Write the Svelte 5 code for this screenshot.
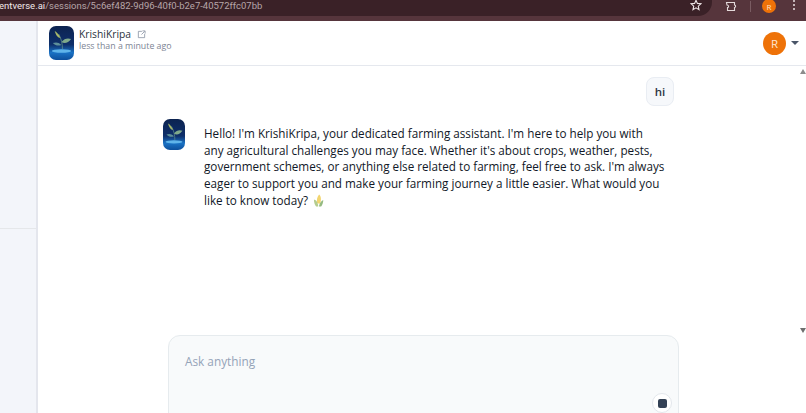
<script>
  const reply = "Hello! I'm KrishiKripa, your dedicated farming assistant. I'm here to help you with any agricultural challenges you may face. Whether it's about crops, weather, pests, government schemes, or anything else related to farming, feel free to ask. I'm always eager to support you and make your farming journey a little easier. What would you like to know today?";
</script>

{#snippet logo(id)}
  <svg class="logo-art" viewBox="0 0 26 34" preserveAspectRatio="none" aria-hidden="true">
    <defs>
      <linearGradient id={id} x1="0" y1="0" x2="0" y2="1">
        <stop offset="0" stop-color="#0c2350" />
        <stop offset="0.55" stop-color="#0e2f6b" />
        <stop offset="0.78" stop-color="#1a72c4" />
        <stop offset="1" stop-color="#0d4f9c" />
      </linearGradient>
    </defs>
    <rect width="26" height="34" fill="url(#{id})" />
    <path d="M14 23 C14 18 13 13 10 8" stroke="#5f8f8a" stroke-width="0.8" fill="none" />
    <path d="M12 12 C10 8 8 6 6 5 C7 9 9 12 12 12Z" fill="#a9b86a" />
    <path d="M13 16 C16 12 20 12 23 13 C20 17 16 18 13 16Z" fill="#7fa98a" />
    <path d="M13 19 C10 16 7 16 4 17 C7 20 10 20 13 19Z" fill="#5d8f9a" />
    <ellipse cx="13" cy="25" rx="10" ry="1.8" fill="#5fb4ea" />
  </svg>
{/snippet}

<div class="page">
  <div class="chrome">
    <div class="omnibox">
      <span class="url"><b>entverse.ai</b>/sessions/5c6ef482-9d96-40f0-b2e7-40572ffc07bb</span>
      <svg class="star" viewBox="0 0 12 12" aria-hidden="true">
        <path d="M6 1.2 7.4 4.4 10.9 4.8 8.3 7.1 9 10.6 6 8.8 3 10.6 3.7 7.1 1.1 4.8 4.6 4.4Z" />
      </svg>
    </div>
    <div class="tools">
      <svg class="ext" viewBox="0 0 12 12" aria-hidden="true">
        <path d="M1.5 2.5H9.5V5C11 5 11 7.5 9.5 7.5V10.5H2.5V7.5C4 7.5 4 5 2 5Z" />
      </svg>
      <span class="sep"></span>
      <span class="mini-avatar">R</span>
      <span class="dots"><i></i><i></i><i></i></span>
    </div>
  </div>

  <div class="shell">
    <aside class="rail">
      <div class="rail-top"></div>
      <div class="rail-bottom"></div>
    </aside>

    <main class="main">
      <header class="header">
        <div class="logo large">{@render logo("g1")}</div>
        <div class="agent">
          <div class="name-row">
            <span class="name">KrishiKripa</span>
            <svg class="open" viewBox="0 0 10 10" aria-hidden="true">
              <path d="M5.5 1.5H1.5V8.5H8.5V4.5M5 5 8.5 1.5M6 1H9V4" />
            </svg>
          </div>
          <div class="time">less than a minute ago</div>
        </div>
        <div class="user">
          <span class="avatar">R</span>
          <span class="caret"></span>
        </div>
      </header>

      <div class="body">
        <div class="content">
          <div class="thread">
            <div class="user-row"><span class="bubble">hi</span></div>
            <div class="reply">
              <div class="logo small">{@render logo("g2")}</div>
              <p>{reply} <span class="emoji" aria-label="corn">
                <svg viewBox="0 0 10 12" aria-hidden="true">
                  <path d="M5.6 0.5C7.6 2 7.6 6 6.4 9L3.6 8.5C3.2 5.5 3.8 2.2 5.6 0.5Z" fill="#f2d56f" />
                  <path d="M0.8 5C3.2 5.6 4.6 8 4.8 11.5L2.8 11.5C1.4 9.6 0.7 7.2 0.8 5Z" fill="#b4cc8e" />
                  <path d="M9.4 5.5C7.2 6.4 6 8.6 5.4 11.5L7.4 11.5C8.6 10 9.4 7.8 9.4 5.5Z" fill="#94ba80" />
                </svg>
              </span></p>
            </div>
          </div>
          <div class="composer">
            <span class="placeholder">Ask anything</span>
            <span class="stop"><i></i></span>
          </div>
        </div>
        <div class="scrollbar">
          <span class="arrow up"></span>
          <span class="arrow down"></span>
        </div>
      </div>
    </main>
  </div>
</div>

<style>
  :global(body) {
    margin: 0;
    background: #fff;
    overflow: hidden;
  }
  .page {
    width: 806px;
    height: 413px;
    display: flex;
    flex-direction: column;
    overflow: hidden;
    font-family: "Open Sans", "Noto Sans", sans-serif;
    color: #1f2937;
  }
  .chrome {
    height: 21px;
    flex: none;
    background: #56353c;
    display: flex;
    align-items: flex-start;
  }
  .omnibox {
    width: 712px;
    height: 16px;
    background: #3a2127;
    border-radius: 0 0 14px 0;
    display: flex;
    justify-content: space-between;
    align-items: center;
    padding-right: 10px;
    box-sizing: border-box;
    overflow: hidden;
  }
  .url {
    font-family: "Roboto", sans-serif;
    font-size: 9.5px;
    color: #b7a6a9;
    white-space: nowrap;
    margin-left: -1px;
    margin-top: -5px;
  }
  .url b {
    font-weight: 400;
    color: #f1e9ea;
  }
  .star {
    width: 12px;
    height: 12px;
    margin-top: -6px;
    fill: none;
    stroke: #ece4e5;
    stroke-width: 1.1;
  }
  .tools {
    flex: 1;
    display: flex;
    align-items: center;
    height: 12px;
    padding-left: 13px;
  }
  .ext {
    width: 12px;
    height: 12px;
    fill: none;
    stroke: #e4dadb;
    stroke-width: 1.1;
  }
  .sep {
    width: 1px;
    height: 11px;
    background: #7a5c62;
    margin-left: 13px;
  }
  .mini-avatar {
    width: 14px;
    height: 14px;
    border-radius: 50%;
    background: #ee7208;
    color: #ffe3c9;
    font-size: 8px;
    display: flex;
    align-items: center;
    justify-content: center;
    margin-left: 11px;
  }
  .dots {
    display: flex;
    flex-direction: column;
    gap: 2px;
    margin-left: 17px;
    margin-top: -2px;
  }
  .dots i {
    width: 2px;
    height: 2px;
    border-radius: 50%;
    background: #e8dfe0;
  }
  .shell {
    flex: 1;
    min-height: 0;
    display: flex;
  }
  .rail {
    width: 36px;
    flex: none;
    background: #f3f5fa;
    border-right: 2px solid #e4e6ed;
    display: flex;
    flex-direction: column;
  }
  .rail-top {
    height: 207px;
    flex: none;
    border-bottom: 1px solid #e5e7ea;
  }
  .main {
    flex: 1;
    min-width: 0;
    display: flex;
    flex-direction: column;
  }
  .header {
    height: 45px;
    flex: none;
    box-sizing: border-box;
    border-bottom: 1px solid #e5e8ee;
    display: flex;
    align-items: center;
    padding: 0 7px 0 11px;
  }
  .logo {
    overflow: hidden;
    flex: none;
    line-height: 0;
  }
  .logo.large {
    width: 25px;
    height: 34px;
    border-radius: 7px;
  }
  .logo.small {
    width: 22px;
    height: 31px;
    border-radius: 7px;
  }
  .logo-art {
    width: 100%;
    height: 100%;
  }
  .agent {
    margin-left: 5px;
    flex: 1;
    margin-top: -7px;
  }
  .name-row {
    display: flex;
    align-items: center;
    gap: 6px;
    height: 14px;
  }
  .name {
    font-size: 10.3px;
    font-weight: 500;
    color: #2b3340;
  }
  .open {
    width: 9px;
    height: 9px;
    fill: none;
    stroke: #8a93a3;
    stroke-width: 0.9;
  }
  .time {
    font-size: 8.8px;
    line-height: 11px;
    color: #7c8494;
  }
  .user {
    display: flex;
    align-items: center;
    gap: 5px;
  }
  .avatar {
    width: 23px;
    height: 23px;
    border-radius: 50%;
    background: #ee7208;
    color: #ffe6d0;
    font-size: 11.5px;
    display: flex;
    align-items: center;
    justify-content: center;
  }
  .caret {
    width: 0;
    height: 0;
    border-left: 4px solid transparent;
    border-right: 4px solid transparent;
    border-top: 4px solid #4a5568;
  }
  .body {
    flex: 1;
    min-height: 0;
    display: flex;
  }
  .content {
    flex: 1;
    min-width: 0;
    display: flex;
    flex-direction: column;
    justify-content: space-between;
  }
  .thread {
    padding: 11px 0 0 125px;
    width: 511px;
    box-sizing: content-box;
  }
  .user-row {
    display: flex;
    justify-content: flex-end;
  }
  .bubble {
    width: 28px;
    height: 29px;
    box-sizing: border-box;
    border: 1px solid #e9edf3;
    border-radius: 8px;
    background: #f6f8fb;
    font-size: 11.5px;
    font-weight: 600;
    color: #2d3542;
    display: flex;
    align-items: center;
    justify-content: center;
  }
  .reply {
    display: flex;
    gap: 19px;
    margin-top: 13px;
  }
  .reply p {
    margin: 6px 0 0;
    width: 461px;
    font-size: 11.7px;
    font-weight: 500;
    line-height: 16.7px;
    color: #111827;
  }
  .emoji svg {
    width: 11px;
    height: 13px;
    vertical-align: -2px;
    margin-left: 2px;
  }
  .composer {
    margin-left: 130px;
    width: 511px;
    height: 90px;
    margin-bottom: -12px;
    flex: none;
    box-sizing: border-box;
    background: #f8fafb;
    border: 1px solid #e6ebee;
    border-radius: 12px;
    padding: 16px 16px 0;
    position: relative;
    line-height: 17px;
  }
  .placeholder {
    font-size: 11.8px;
    font-weight: 500;
    color: #94a3b8;
  }
  .stop {
    position: absolute;
    right: 6px;
    top: 57px;
    width: 20px;
    height: 20px;
    border-radius: 50%;
    background: #fff;
    border: 1px solid #e3e7ec;
    box-sizing: border-box;
    display: flex;
    align-items: center;
    justify-content: center;
  }
  .stop i {
    width: 9px;
    height: 9px;
    border-radius: 2px;
    background: #334155;
  }
  .scrollbar {
    width: 7px;
    flex: none;
    display: flex;
    flex-direction: column;
    justify-content: space-between;
    align-items: center;
    padding: 3px 0 80px;
    margin-left: auto;
  }
  .arrow {
    width: 0;
    height: 0;
    border-left: 3.5px solid transparent;
    border-right: 3.5px solid transparent;
  }
  .arrow.up {
    border-bottom: 5px solid #8c8c8c;
  }
  .arrow.down {
    border-top: 5px solid #6e6e6e;
  }
</style>
